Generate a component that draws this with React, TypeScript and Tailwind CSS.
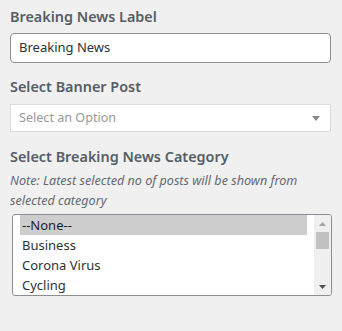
import React from "react";

export default function App() {
  const items = ["--None--", "Business", "Corona Virus", "Cycling"];
  return (
    <div
      className="w-[342px] h-[331px] bg-[#f0f0f0] pl-[10px] pt-[7px]"
      style={{ fontFamily: '"Noto Sans", "Open Sans", sans-serif' }}
    >
      <div className="h-[20px] leading-[20px] text-[14.4px] font-semibold text-[#555d66]">
        Breaking News Label
      </div>
      <div className="mt-[6px] w-[321px] h-[30px] border border-[#8c8f94] rounded-[4px] bg-white flex items-center pl-[8px] text-[13px] text-[#2c3338]">
        Breaking News
      </div>
      <div className="mt-[14px] h-[20px] leading-[20px] text-[14.4px] font-semibold text-[#555d66]">
        Select Banner Post
      </div>
      <div className="mt-[7px] w-[321px] h-[28px] border border-[#dddddd] bg-white flex items-center justify-between pl-[8px] pr-[10px] text-[12.6px] text-[#999999]">
        <span>Select an Option</span>
        <svg width="8" height="5" viewBox="0 0 8 5">
          <path d="M0 0H8L4 5Z" fill="#888888" />
        </svg>
      </div>
      <div className="mt-[15px] h-[20px] leading-[20px] text-[14.4px] font-semibold text-[#555d66]">
        Select Breaking News Category
      </div>
      <div className="mt-[4px] w-[300px] leading-[20px] text-[12.6px] italic text-[#646970]">
        Note: Latest selected no of posts will be shown from selected category
      </div>
      <div className="mt-[3px] ml-[2px] w-[320px] h-[82px] border border-[#8c8f94] rounded-[3px] bg-white flex overflow-hidden">
        <div className="flex-1 pl-[7px] pr-[7px] text-[13px] text-[#2c3338]">
          {items.map((it, i) => (
            <div
              key={it}
              className={
                "h-[20px] leading-[20px] pl-[2px] " +
                (i === 0 ? "bg-[#cdcdcd] text-[#1e1e1e]" : "")
              }
            >
              {it}
            </div>
          ))}
        </div>
        <div className="w-[17px] h-full bg-[#f0f0f0] flex flex-col items-center">
          <div className="h-[17px] flex items-center justify-center">
            <svg width="7" height="4" viewBox="0 0 7 4">
              <path d="M0 4H7L3.5 0Z" fill="#a3a3a3" />
            </svg>
          </div>
          <div className="w-[13px] h-[17px] bg-[#c1c1c1]" />
          <div className="flex-1" />
          <div className="h-[17px] flex items-center justify-center">
            <svg width="7" height="4" viewBox="0 0 7 4">
              <path d="M0 0H7L3.5 4Z" fill="#505050" />
            </svg>
          </div>
        </div>
      </div>
    </div>
  );
}
